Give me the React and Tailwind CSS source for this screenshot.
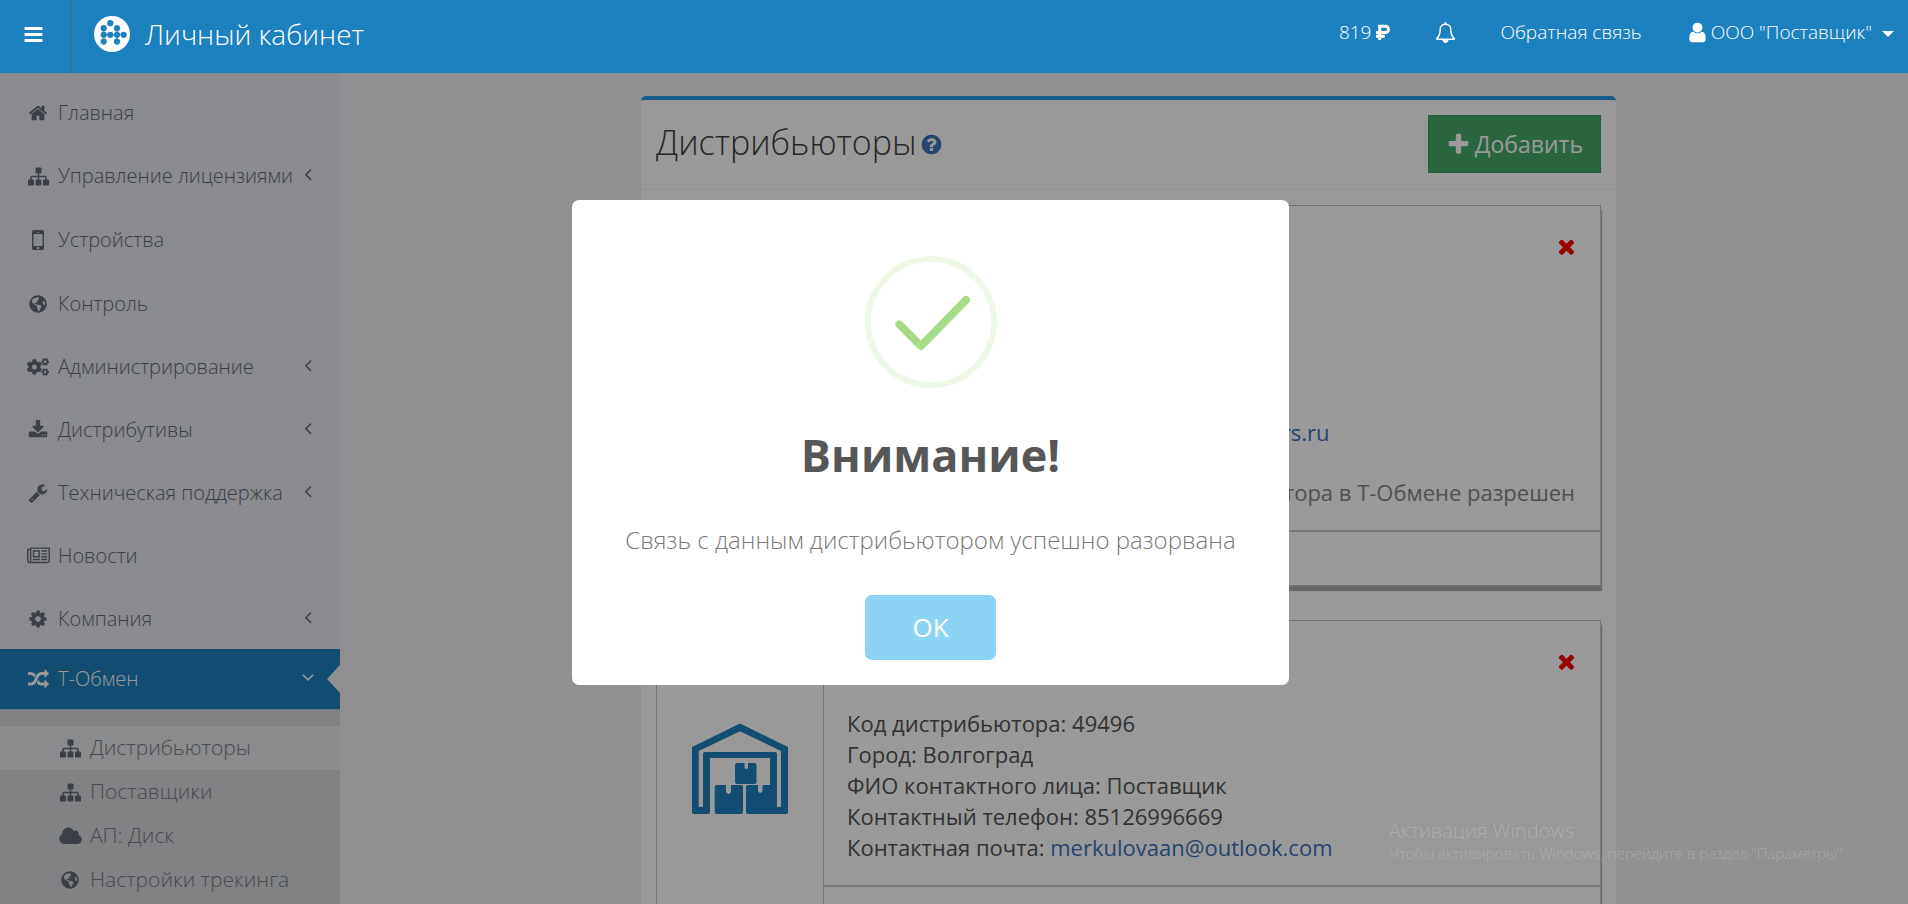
import { useState } from 'react';
import { FaCogs, FaGlobeAmericas } from 'react-icons/fa';

const icons = {
  bars: 'M1664 1344v128q0 26-19 45t-45 19h-1408q-26 0-45-19t-19-45v-128q0-26 19-45t45-19h1408q26 0 45 19t19 45zm0-512v128q0 26-19 45t-45 19h-1408q-26 0-45-19t-19-45v-128q0-26 19-45t45-19h1408q26 0 45 19t19 45zm0-512v128q0 26-19 45t-45 19h-1408q-26 0-45-19t-19-45v-128q0-26 19-45t45-19h1408q26 0 45 19t19 45z',
  home: 'M1472 992v480q0 26-19 45t-45 19h-384v-384h-256v384h-384q-26 0-45-19t-19-45v-480q0-1 .5-3t.5-3l575-474 575 474q1 2 1 6zm223-69l-62 74q-8 9-21 11h-3q-13 0-21-7l-692-577-692 577q-12 8-24 7-13-2-21-11l-62-74q-8-10-7-23.5t11-21.5l719-599q32-26 76-26t76 26l244 204v-195q0-14 9-23t23-9h192q14 0 23 9t9 23v408l219 182q10 8 11 21.5t-7 23.5z',
  sitemap: 'M1792 1248v320q0 40-28 68t-68 28h-320q-40 0-68-28t-28-68v-320q0-40 28-68t68-28h96v-192h-512v192h96q40 0 68 28t28 68v320q0 40-28 68t-68 28h-320q-40 0-68-28t-28-68v-320q0-40 28-68t68-28h96v-192h-512v192h96q40 0 68 28t28 68v320q0 40-28 68t-68 28h-320q-40 0-68-28t-28-68v-320q0-40 28-68t68-28h96v-192q0-52 38-90t90-38h512v-192h-96q-40 0-68-28t-28-68v-320q0-40 28-68t68-28h320q40 0 68 28t28 68v320q0 40-28 68t-68 28h-96v192h512q52 0 90 38t38 90v192h96q40 0 68 28t28 68z',
  mobile: 'M976 1408q0-33-23.5-56.5t-56.5-23.5-56.5 23.5-23.5 56.5 23.5 56.5 56.5 23.5 56.5-23.5 23.5-56.5zm208-160v-704q0-13-9.5-22.5t-22.5-9.5h-512q-13 0-22.5 9.5t-9.5 22.5v704q0 13 9.5 22.5t22.5 9.5h512q13 0 22.5-9.5t9.5-22.5zm-192-848q0-16-16-16h-160q-16 0-16 16t16 16h160q16 0 16-16zm288-16v1024q0 52-38 90t-90 38h-512q-52 0-90-38t-38-90v-1024q0-52 38-90t90-38h512q52 0 90 38t38 90z',
  cog: 'M1152 896q0-106-75-181t-181-75-181 75-75 181 75 181 181 75 181-75 75-181zm512-109v222q0 12-8 23t-20 13l-185 28q-19 54-39 91 35 50 107 138 10 12 10 25t-9 23q-27 37-99 108t-94 71q-12 0-26-9l-138-108q-44 23-91 38-16 136-29 186-7 28-36 28h-222q-14 0-24.5-8.5t-11.5-21.5l-28-184q-49-16-90-37l-141 107q-10 9-25 9-14 0-25-11-126-114-165-168-7-10-7-23 0-12 8-23 15-21 51-66.5t54-70.5q-27-50-41-99l-183-27q-13-2-21-12.5t-8-23.5v-222q0-12 8-23t19-13l186-28q14-46 39-92-40-57-107-138-10-12-10-24 0-10 9-23 26-36 98.5-107.5t94.5-71.5q13 0 26 10l138 107q44-23 91-38 16-136 29-186 7-28 36-28h222q14 0 24.5 8.5t11.5 21.5l28 184q49 16 90 37l142-107q9-9 24-9 13 0 25 10 129 119 165 170 7 8 7 22 0 12-8 23-15 21-51 66.5t-54 70.5q26 50 41 98l183 28q13 2 21 12.5t8 23.5z',
  download: 'M1344 1344q0-26-19-45t-45-19-45 19-19 45 19 45 45 19 45-19 19-45zm256 0q0-26-19-45t-45-19-45 19-19 45 19 45 45 19 45-19 19-45zm128-224v320q0 40-28 68t-68 28h-1472q-40 0-68-28t-28-68v-320q0-40 28-68t68-28h465l135 136q58 56 136 56t136-56l136-136h464q40 0 68 28t28 68zm-325-569q17 41-14 70l-448 448q-18 19-45 19t-45-19l-448-448q-31-29-14-70 17-39 59-39h256v-448q0-26 19-45t45-19h256q26 0 45 19t19 45v448h256q42 0 59 39z',
  wrench: 'M448 1472q0-26-19-45t-45-19-45 19-19 45 19 45 45 19 45-19 19-45zm644-420l-682 682q-37 37-90 37-52 0-91-37l-106-108q-38-36-38-90 0-53 38-91l681-681q39 98 114.5 173.5t173.5 114.5zm634-435q0 39-23 106-47 134-164.5 217.5t-258.5 83.5q-185 0-316.5-131.5t-131.5-316.5 131.5-316.5 316.5-131.5q58 0 121.5 16.5t107.5 46.5q16 11 16 28t-16 28l-293 169v224l193 107q5-3 79-48.5t135.5-81 70.5-35.5q15 0 23.5 10t8.5 25z',
  newspaper: 'M1024 512h-384v384h384v-384zm128 640v128h-640v-128h640zm0-768v640h-640v-640h640zm640 768v128h-512v-128h512zm0-256v128h-512v-128h512zm0-256v128h-512v-128h512zm0-256v128h-512v-128h512zm-1536 960v-960h-128v960q0 26 19 45t45 19 45-19 19-45zm1664 0v-1088h-1536v1088q0 33-11 64h1483q26 0 45-19t19-45zm128-1216v1216q0 80-56 136t-136 56h-1664q-80 0-136-56t-56-136v-1088h256v-128h1792z',
  random: 'M666 481q-60 92-137 273-22-45-37-72.5t-40.5-63.5-51-56.5-63-35-81.5-14.5h-224q-14 0-23-9t-9-23v-192q0-14 9-23t23-9h224q250 0 410 225zm1126 799q0 14-9 23l-320 320q-9 9-23 9-13 0-22.5-9.5t-9.5-22.5v-192q-32 0-85 .5t-81 1-73-1-71-5-64-10.5-63-18.5-58-28.5-59-40-55-53.5-56-69.5q59-93 136-273 22 45 37 72.5t40.5 63.5 51 56.5 63 35 81.5 14.5h256v-192q0-14 9-23t23-9q12 0 24 10l319 319q9 9 9 23zm0-896q0 14-9 23l-320 320q-9 9-23 9-13 0-22.5-9.5t-9.5-22.5v-192h-256q-48 0-87 15t-69 45-51 61.5-45 77.5q-32 62-78 171-29 66-49.5 111t-54 105-64 100-74 83-90 68.5-106.5 42-128 16.5h-224q-14 0-23-9t-9-23v-192q0-14 9-23t23-9h224q48 0 87-15t69-45 51-61.5 45-77.5q32-62 78-171 29-66 49.5-111t54-105 64-100 74-83 90-68.5 106.5-42 128-16.5h256v-192q0-14 9-23t23-9q12 0 24 10l319 319q9 9 9 23z',
  cloud: 'M1856 1152q0 159-112.5 271.5t-271.5 112.5h-1088q-185 0-316.5-131.5t-131.5-316.5q0-132 71-241.5t187-163.5q-2-28-2-43 0-212 150-362t362-150q158 0 286.5 88t187.5 230q70-62 166-62 106 0 181 75t75 181q0 75-41 138 129 30 213 134.5t84 239.5z',
  bell: 'M246 1408h1300q-266-300-266-832 0-51-24-105t-69-103-121.5-80.5-169.5-31.5-169.5 31.5-121.5 80.5-69 103-24 105q0 532-266 832zm1482 0q0 52-38 90t-90 38h-448q0 106-75 181t-181 75-181-75-75-181h-448q-52 0-90-38t-38-90q50-42 91-88t85-119.5 74.5-158.5 50-206 19.5-260q0-152 117-282.5t307-158.5q-8-19-8-39 0-40 28-68t68-28 68 28 28 68q0 20-8 39 190 28 307 158.5t117 282.5q0 139 19.5 260t50 206 74.5 158.5 85 119.5 91 88z',
  user: 'M1536 1399q0 109-62.5 187t-150.5 78h-854q-88 0-150.5-78t-62.5-187q0-85 8.5-160.5t31.5-152 58.5-131 94-89 134.5-34.5q131 128 313 128t313-128q76 0 134.5 34.5t94 89 58.5 131 31.5 152 8.5 160.5zm-256-887q0 159-112.5 271.5t-271.5 112.5-271.5-112.5-112.5-271.5 112.5-271.5 271.5-112.5 271.5 112.5 112.5 271.5z',
  plus: 'M1600 736v192q0 40-28 68t-68 28h-416v416q0 40-28 68t-68 28h-192q-40 0-68-28t-28-68v-416h-416q-40 0-68-28t-28-68v-192q0-40 28-68t68-28h416v-416q0-40 28-68t68-28h192q40 0 68 28t28 68v416h416q40 0 68 28t28 68z',
  times: 'M1490 1322q0 40-28 68l-136 136q-28 28-68 28t-68-28l-294-294-294 294q-28 28-68 28t-68-28l-136-136q-28-28-28-68t28-68l294-294-294-294q-28-28-28-68t28-68l136-136q28-28 68-28t68 28l294 294 294-294q28-28 68-28t68 28l136 136q28 28 28 68t-28 68l-294 294 294 294q28 28 28 68z',
  question: 'M1024 1376v-192q0-14-9-23t-23-9h-192q-14 0-23 9t-9 23v192q0 14 9 23t23 9h192q14 0 23-9t9-23zm256-672q0-88-55.5-163t-138.5-116-170-41q-243 0-371 213-15 24 8 42l132 100q7 6 19 6 16 0 25-12 53-68 86-92 34-24 86-24 48 0 85.5 26t37.5 59q0 38-20 61t-68 45q-63 28-115.5 86.5t-52.5 125.5v36q0 14 9 23t23 9h192q14 0 23-9t9-23q0-19 21.5-49.5t54.5-49.5q32-18 49-28.5t46-35 44.5-48 28-60.5 12.5-81zm384 192q0 209-103 385.5t-279.5 279.5-385.5 103-385.5-103-279.5-279.5-103-385.5 103-385.5 279.5-279.5 385.5-103 385.5 103 279.5 279.5 103 385.5z',
  angleLeft: 'M1203 544q0 13-10 23l-393 393 393 393q10 10 10 23t-10 23l-50 50q-10 10-23 10t-23-10l-466-466q-10-10-10-23t10-23l466-466q10-10 23-10t23 10l50 50q10 10 10 23z',
  angleDown: 'M1395 736q0 13-10 23l-466 466q-10 10-23 10t-23-10l-466-466q-10-10-10-23t10-23l50-50q10-10 23-10t23 10l393 393 393-393q10-10 23-10t23 10l50 50q10 10 10 23z',
};

function Icon({ name, className = 'size-5', viewBox = '0 0 1792 1792' }) {
  return (
    <svg viewBox={viewBox} fill="currentColor" aria-hidden="true" className={`shrink-0 ${className}`}>
      <path d={icons[name]} />
    </svg>
  );
}

const menu = [
  { label: 'Главная', icon: <Icon name="home" /> },
  { label: 'Управление лицензиями', icon: <Icon name="sitemap" className="size-[21px]" />, sub: true },
  { label: 'Устройства', icon: <Icon name="mobile" className="size-7" />, tall: true },
  { label: 'Контроль', icon: <FaGlobeAmericas className="size-[18px]" /> },
  { label: 'Администрирование', icon: <FaCogs className="size-[22px]" />, sub: true },
  { label: 'Дистрибутивы', icon: <Icon name="download" />, sub: true },
  { label: 'Техническая поддержка', icon: <Icon name="wrench" />, sub: true },
  { label: 'Новости', icon: <Icon name="newspaper" viewBox="0 0 2048 1792" className="h-5 w-[23px]" /> },
  { label: 'Компания', icon: <Icon name="cog" />, sub: true },
];

const subMenu = [
  { label: 'Дистрибьюторы', icon: <Icon name="sitemap" className="size-[21px]" />, active: true },
  { label: 'Поставщики', icon: <Icon name="sitemap" className="size-[21px]" /> },
  { label: 'АП: Диск', icon: <Icon name="cloud" viewBox="-64 0 1920 1792" className="h-[21px] w-[23px]" /> },
  { label: 'Настройки трекинга', icon: <FaGlobeAmericas className="size-[18px]" /> },
];

const distributors = [
  {
    code: '48211',
    city: 'Москва',
    contact: 'Дистрибьютор',
    phone: '84957654321',
    email: 'support.24@distributors.ru',
    status: 'Статус дистрибьютора в Т-Обмене разрешен',
  },
  {
    code: '49496',
    city: 'Волгоград',
    contact: 'Поставщик',
    phone: '85126996669',
    email: 'merkulovaan@outlook.com',
  },
];

function Logo() {
  return (
    <svg viewBox="0 0 36 36" className="size-9" aria-hidden="true">
      <circle cx="18" cy="18" r="18" fill="#fff" />
      <path
        d="M9.7 12v14M23 12v14M9.7 18.8h20"
        fill="none"
        stroke="#1e81bf"
        strokeWidth="2"
        strokeOpacity=".5"
      />
      <g fill="#1e81bf">
        <circle cx="16.3" cy="7.2" r="3.1" />
        <circle cx="9.7" cy="12.2" r="3.1" />
        <circle cx="23" cy="12.2" r="3.1" />
        <circle cx="9.7" cy="18.8" r="3.1" />
        <circle cx="16.3" cy="18.8" r="3.1" />
        <circle cx="23" cy="18.8" r="3.1" />
        <circle cx="29.7" cy="18.8" r="3.1" />
        <circle cx="9.7" cy="25.6" r="3.1" />
        <circle cx="23" cy="25.6" r="3.1" />
      </g>
    </svg>
  );
}

function Ruble() {
  return (
    <svg viewBox="0 0 16 16" className="size-4" aria-hidden="true" fill="none" stroke="currentColor" strokeWidth="3">
      <path d="M4.7 16V2.2h5.6a3.2 3.2 0 0 1 0 6.4H1M1 12.3h9" />
    </svg>
  );
}

function Warehouse() {
  return (
    <svg viewBox="12 13 96 92" className="h-[92px] w-24" aria-hidden="true" fill="#1e81bf">
      <path
        fillRule="evenodd"
        d="M12 102V37L60 13.5 108 37V102q0 2-2 2H68q-2 0-2-2V77q0-2 2-2h10v6q2 4 4.5 0v-6H90V48H30V102q0 2-2 2H14q-2 0-2-2zM18.7 97V41L60 21.3 101 41V97H97V44q0-2-2-2H25q-2 0-2 2V97z"
      />
      <path d="M57 53h7.500v5q2 2 3.500 0v-5H74.500q2 0 2 2V72q0 2-2 2H57q-2 0-2-2V55q0-2 2-2z" />
      <path d="M36.700 75H46v7q2.500 4 5 0v-7H61q2 0 2 2V102q0 2-2 2H36.700q-2 0-2-2V77q0-2 2-2z" />
    </svg>
  );
}

function Header() {
  return (
    <header className="relative z-20 flex h-[73px] shrink-0 bg-[#1e81bf] font-light text-white">
      <button type="button" aria-label="Меню" className="w-[71px] border-r border-[#4a6272] pb-1 pl-[23px]">
        <Icon name="bars" className="size-[21px]" />
      </button>
      <a href="#" className="flex items-center gap-[15px] pb-[5px] pl-[23px] text-[28px]">
        <Logo />
        Личный кабинет
      </a>
      <nav className="ml-auto flex items-center gap-11 pb-[9px] pr-[14px] text-[19px]">
        <a href="#" className="flex items-center gap-1">
          819
          <Ruble />
        </a>
        <button type="button" aria-label="Уведомления">
          <Icon name="bell" className="size-[21px]" />
        </button>
        <a href="#">Обратная связь</a>
        <button type="button" className="flex items-center">
          <Icon name="user" className="mr-[2px] size-[23px]" />
          ООО "Поставщик"
          <span className="ml-[10px] mt-1 border-x-6 border-t-6 border-x-transparent border-t-white" />
        </button>
      </nav>
    </header>
  );
}

function Sidebar() {
  return (
    <aside className="w-[341px] shrink-0 border-r border-[#e9eaef] bg-[#e6e8ed] pt-[10px] font-light text-[#666a78]">
      <ul className="flex flex-col gap-[3px]">
        {menu.map((item) => (
          <li key={item.label}>
            <a href="#" className={`flex items-center pl-6 pr-[22px] text-xl ${item.tall ? 'h-[62px]' : 'h-[60px]'}`}>
              <span className="mr-[6px] flex w-7 justify-center">{item.icon}</span>
              {item.label}
              {item.sub && <Icon name="angleLeft" className="mb-1 ml-auto size-5" />}
            </a>
          </li>
        ))}
      </ul>
      <a href="#" className="relative flex h-[60px] items-center bg-[#1e81bf] pl-6 pr-[22px] text-xl text-white">
        <span className="mr-[6px] flex w-7 justify-center">
          <Icon name="random" className="size-[21px]" />
        </span>
        Т-Обмен
        <Icon name="angleDown" className="mb-1 ml-auto size-5" />
        <span className="absolute right-0 top-4 border-y-[14px] border-r-[13px] border-y-transparent border-r-[#f1f1f4]" />
      </a>
      <ul className="border-t border-[#c5cad3] bg-[#d8d9dd] pb-10 pt-4 text-[21px]">
        {subMenu.map((item) => (
          <li key={item.label}>
            <a href="#" className={`flex h-11 items-center pl-14 ${item.active ? 'bg-[#e7e8ea]' : ''}`}>
              <span className="mr-[6px] flex w-7 justify-center text-[#666a78]">{item.icon}</span>
              <span className="text-[#7b7d86]">{item.label}</span>
            </a>
          </li>
        ))}
      </ul>
    </aside>
  );
}

function DistributorCard({ item }) {
  return (
    <article className="flex border border-[#c4c4c4] shadow-[1px_5px_1px_#b0b0b0]">
      <div className="flex w-[167px] shrink-0 justify-center border-r border-[#c4c4c4] pt-[102px]">
        <Warehouse />
      </div>
      <div className="flex-1">
        <div className="relative pb-[22px] pl-[23px] pr-[25px] pt-[87px] text-[22px] leading-[31px] text-[#555]">
          <button type="button" aria-label="Удалить" className="absolute right-[22px] top-[29px] text-[#f00]">
            <Icon name="times" className="size-[23px]" />
          </button>
          <p>Код дистрибьютора: {item.code}</p>
          <p>Город: {item.city}</p>
          <p>ФИО контактного лица: {item.contact}</p>
          <p>Контактный телефон: {item.phone}</p>
          <p>
            Контактная почта: <a href={`mailto:${item.email}`} className="text-[#4272b8]">{item.email}</a>
          </p>
          {item.status && <p className="mt-[29px] text-right text-[#888]">{item.status}</p>}
        </div>
        <div className="h-[55px] border-t-2 border-[#c8c8c8]" />
      </div>
    </article>
  );
}

function SuccessDialog({ onClose }) {
  return (
    <div className="fixed inset-0 z-10 bg-black/40">
      <div
        role="dialog"
        aria-labelledby="dialog-title"
        className="absolute left-1/2 top-1/2 -ml-[382px] -mt-[252px] flex w-[717px] flex-col items-center rounded-[7px] bg-white px-6 pb-[25px] pt-14 text-center"
      >
        <svg viewBox="0 0 132 132" className="size-[132px]" aria-hidden="true" fill="none">
          <circle cx="66" cy="66" r="63" stroke="#edf8e7" strokeWidth="6" />
          <path d="M34.5 68.5 56 90l45-46" stroke="#a5dc86" strokeWidth="8" strokeLinecap="round" strokeLinejoin="round" />
        </svg>
        <h2 id="dialog-title" className="mt-[37px] text-[45px] font-bold leading-[60px] text-[#575757]">
          Внимание!
        </h2>
        <p className="mt-[37px] text-2xl font-light leading-9 text-[#797979]">
          Связь с данным дистрибьютором успешно разорвана
        </p>
        <button
          type="button"
          onClick={onClose}
          className="mt-[37px] h-[65px] w-[131px] rounded-[7px] bg-[#8cd4f5] text-[26px] text-white"
        >
          OK
        </button>
      </div>
    </div>
  );
}

export default function App() {
  const [dialogOpen, setDialogOpen] = useState(true);

  return (
    <div className="flex h-screen flex-col overflow-hidden bg-[#f1f1f4] font-['Open_Sans',sans-serif]">
      <Header />
      <div className="flex min-h-0 flex-1">
        <Sidebar />
        <main className="min-w-0 flex-1 overflow-hidden pl-[300px] pr-[292px] pt-[23px]">
          <section className="rounded-t-[5px] border-t-4 border-[#2c9be6] bg-white">
            <div className="flex items-center justify-between border-b border-[#f4f4f4] pb-4 pl-[15px] pr-[15px] pt-[15px]">
              <h1 className="mb-1 flex items-center gap-[3px] text-[34px] font-light leading-[42px] text-[#444]">
                Дистрибьюторы
                <Icon name="question" className="mt-1 size-[23px] text-[#4272b8]" />
              </h1>
              <button
                type="button"
                className="flex h-[58px] items-center gap-1 border border-[#3f9d62] bg-[#45aa6b] px-[17px] text-[23px] text-white"
              >
                <Icon name="plus" className="size-[25px]" />
                Добавить
              </button>
            </div>
            <div className="flex flex-col gap-[34px] px-[15px] py-[15px]">
              {distributors.map((item) => (
                <DistributorCard key={item.code} item={item} />
              ))}
            </div>
          </section>
        </main>
      </div>

      {dialogOpen && <SuccessDialog onClose={() => setDialogOpen(false)} />}

      <div className="pointer-events-none fixed bottom-[41px] right-[62px] z-30 font-light text-white/20">
        <p className="text-xl leading-6">Активация Windows</p>
        <p className="text-[15px] leading-5">Чтобы активировать Windows, перейдите в раздел "Параметры".</p>
      </div>
    </div>
  );
}
